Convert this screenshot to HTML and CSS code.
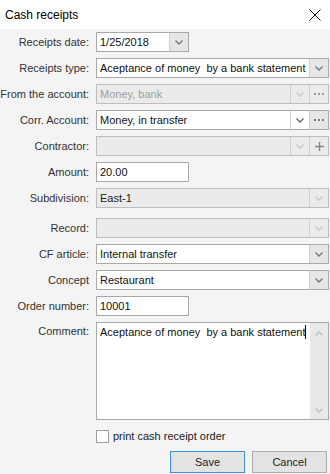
FILE: index.html
```html
<!DOCTYPE html>
<html lang="en">
<head>
    <meta charset="UTF-8">
    <meta name="viewport" content="width=device-width, initial-scale=1.0">
    <title>Cash receipts</title>
    <link rel="stylesheet" href="styles.css">
</head>
<body>

    <div class="titlebar">
        <span class="title">Cash receipts</span>
        <svg class="close" width="12" height="12" viewBox="0 0 12 12">
            <path d="M0.5 0.5 L11.5 11.5 M11.5 0.5 L0.5 11.5" stroke="#111" stroke-width="1" fill="none"/>
        </svg>
    </div>

    <div class="form">
        <label class="lbl">Receipts date:</label>
        <div class="combo short">
            <span class="combo-text">1/25/2018</span>
            <span class="btn grey"><svg width="8" height="5" viewBox="0 0 8 5"><polyline points="0.5,0.5 4,4 7.5,0.5" stroke="#777" stroke-width="1.4" fill="none"/></svg></span>
        </div>

        <label class="lbl">Receipts type:</label>
        <div class="combo">
            <span class="combo-text">Aceptance of money&nbsp; by a bank statement</span>
            <span class="btn grey"><svg width="8" height="5" viewBox="0 0 8 5"><polyline points="0.5,0.5 4,4 7.5,0.5" stroke="#777" stroke-width="1.4" fill="none"/></svg></span>
        </div>

        <label class="lbl">From the account:</label>
        <div class="combo disabled">
            <span class="combo-text">Money, bank</span>
            <span class="btn"><svg width="8" height="5" viewBox="0 0 8 5"><polyline points="0.5,0.5 4,4 7.5,0.5" stroke="#c8c8c8" stroke-width="1.4" fill="none"/></svg></span>
            <span class="btn"><svg width="10" height="2" viewBox="0 0 10 2"><rect x="0" y="0" width="2" height="2" fill="#999"/><rect x="4" y="0" width="2" height="2" fill="#999"/><rect x="8" y="0" width="2" height="2" fill="#999"/></svg></span>
        </div>

        <label class="lbl">Corr. Account:</label>
        <div class="combo">
            <span class="combo-text">Money, in transfer</span>
            <span class="btn"><svg width="8" height="5" viewBox="0 0 8 5"><polyline points="0.5,0.5 4,4 7.5,0.5" stroke="#666" stroke-width="1.4" fill="none"/></svg></span>
            <span class="btn grey"><svg width="10" height="2" viewBox="0 0 10 2"><rect x="0" y="0" width="2" height="2" fill="#777"/><rect x="4" y="0" width="2" height="2" fill="#777"/><rect x="8" y="0" width="2" height="2" fill="#777"/></svg></span>
        </div>

        <label class="lbl">Contractor:</label>
        <div class="combo disabled">
            <span class="combo-text"></span>
            <span class="btn"><svg width="8" height="5" viewBox="0 0 8 5"><polyline points="0.5,0.5 4,4 7.5,0.5" stroke="#c8c8c8" stroke-width="1.4" fill="none"/></svg></span>
            <span class="btn"><svg width="9" height="9" viewBox="0 0 9 9"><path d="M4.5 0 V9 M0 4.5 H9" stroke="#888" stroke-width="1.4" fill="none"/></svg></span>
        </div>

        <label class="lbl">Amount:</label>
        <div class="combo short">
            <span class="combo-text">20.00</span>
        </div>

        <label class="lbl">Subdivision:</label>
        <div class="combo disabled dark-text">
            <span class="combo-text">East-1</span>
            <span class="btn"><svg width="8" height="5" viewBox="0 0 8 5"><polyline points="0.5,0.5 4,4 7.5,0.5" stroke="#c8c8c8" stroke-width="1.4" fill="none"/></svg></span>
        </div>

        <label class="lbl spaced">Record:</label>
        <div class="combo disabled spaced">
            <span class="combo-text"></span>
            <span class="btn"><svg width="8" height="5" viewBox="0 0 8 5"><polyline points="0.5,0.5 4,4 7.5,0.5" stroke="#c8c8c8" stroke-width="1.4" fill="none"/></svg></span>
        </div>

        <label class="lbl">CF article:</label>
        <div class="combo">
            <span class="combo-text">Internal transfer</span>
            <span class="btn grey"><svg width="8" height="5" viewBox="0 0 8 5"><polyline points="0.5,0.5 4,4 7.5,0.5" stroke="#777" stroke-width="1.4" fill="none"/></svg></span>
        </div>

        <label class="lbl">Concept</label>
        <div class="combo">
            <span class="combo-text">Restaurant</span>
            <span class="btn grey"><svg width="8" height="5" viewBox="0 0 8 5"><polyline points="0.5,0.5 4,4 7.5,0.5" stroke="#777" stroke-width="1.4" fill="none"/></svg></span>
        </div>

        <label class="lbl">Order number:</label>
        <div class="combo short">
            <span class="combo-text">10001</span>
        </div>

        <label class="lbl top">Comment:</label>
        <div class="memo">
            <div class="memo-text">Aceptance of money&nbsp; by a bank statement<span class="caret"></span></div>
            <div class="scroll">
                <svg width="8" height="5" viewBox="0 0 8 5"><polyline points="0.5,4.5 4,1 7.5,4.5" stroke="#c0c0c0" stroke-width="1.4" fill="none"/></svg>
                <svg width="8" height="5" viewBox="0 0 8 5"><polyline points="0.5,0.5 4,4 7.5,0.5" stroke="#c0c0c0" stroke-width="1.4" fill="none"/></svg>
            </div>
        </div>

        <span></span>
        <label class="check"><span class="box"></span>print cash receipt order</label>
    </div>

    <div class="buttons">
        <button class="button default">Save</button>
        <button class="button">Cancel</button>
    </div>

</body>
</html>
```

FILE: styles.css
```css
body {
    margin: 0;
    background: #f4f4f4;
    font-family: "Liberation Sans", Arial, sans-serif;
    font-size: 11px;
    color: #222;
}
.titlebar {
    height: 29px;
    background: #fff;
    display: flex;
    align-items: center;
    justify-content: space-between;
    padding: 0 9px 0 5px;
}
.title {
    font-size: 12px;
    color: #000;
}
.form {
    display: grid;
    grid-template-columns: 89px minmax(0, 1fr);
    column-gap: 7px;
    row-gap: 6px;
    padding: 3px 1px 0 0;
}
.lbl {
    text-align: right;
    line-height: 20px;
    color: #333;
    white-space: nowrap;
}
.lbl.top {
    line-height: 18px;
}
.spaced {
    margin-top: 4px;
}
.combo {
    display: flex;
    height: 20px;
    box-sizing: border-box;
    border: 1px solid #a9a9a9;
    background: #fff;
}
.combo.short {
    width: 93px;
}
.combo-text {
    flex: 1;
    min-width: 0;
    padding: 0 3px;
    line-height: 18px;
    color: #111;
    white-space: nowrap;
    overflow: hidden;
}
.combo.disabled {
    background: #ebebeb;
    border-color: #bdbdbd;
}
.combo.disabled .combo-text {
    color: #a0a0a0;
}
.combo.dark-text .combo-text {
    color: #222;
}
.btn {
    width: 18px;
    flex-shrink: 0;
    display: flex;
    align-items: center;
    justify-content: center;
    border-left: 1px solid #cfcfcf;
}
.btn.grey {
    background: #e6e6e6;
}
.memo {
    display: flex;
    height: 98px;
    box-sizing: border-box;
    border: 1px solid #a9a9a9;
    background: #fff;
}
.memo-text {
    flex: 1;
    min-width: 0;
    padding: 2px 3px;
    color: #111;
    line-height: 15px;
    white-space: nowrap;
}
.caret {
    display: inline-block;
    width: 1px;
    height: 14px;
    background: #000;
    vertical-align: -3px;
}
.scroll {
    width: 18px;
    flex-shrink: 0;
    background: #e8e8e8;
    display: flex;
    flex-direction: column;
    justify-content: space-between;
    align-items: center;
    padding: 8px 0 6px;
}
.check {
    display: flex;
    align-items: center;
    gap: 4px;
    margin-top: 3px;
    color: #222;
    line-height: 14px;
}
.box {
    width: 11px;
    height: 11px;
    border: 1px solid #a0a0a0;
    background: #fff;
}
.buttons {
    display: flex;
    justify-content: flex-end;
    gap: 7px;
    padding: 8px 3px 0 0;
}
.button {
    width: 75px;
    height: 22px;
    font-family: inherit;
    font-size: 11px;
    color: #222;
    background: #e3e3e3;
    border: 1px solid #adadad;
}
.button.default {
    border-color: #3c8fe6;
}
```
